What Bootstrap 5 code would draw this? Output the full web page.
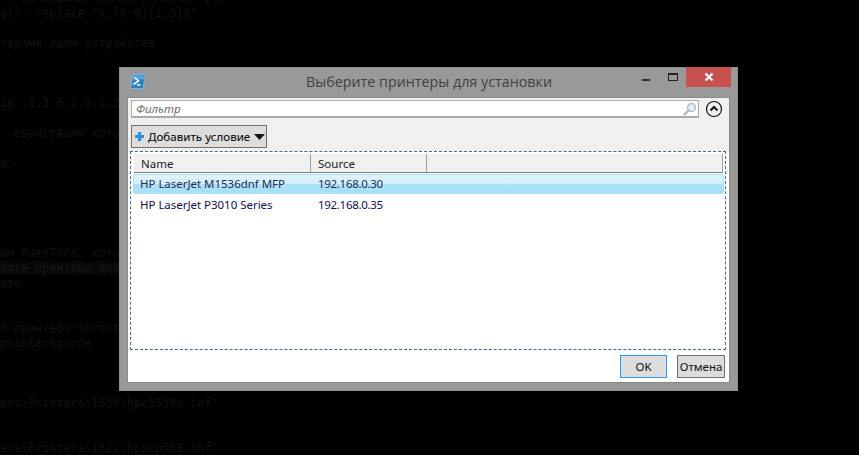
<!DOCTYPE html>
<html lang="ru">
<head>
<meta charset="utf-8">
<title>Выберите принтеры для установки</title>
<link rel="stylesheet" href="https://cdn.jsdelivr.net/npm/bootstrap@5.3.0/dist/css/bootstrap.min.css">
<style>
html,body{height:100%;background:#000;overflow:hidden}
body{position:relative;font-family:"Noto Sans","Open Sans",sans-serif;font-size:11.5px;color:#000}
.code-bg{margin:0;padding:0;color:#111;overflow:hidden;height:455px}
.code-ln{display:block;height:15px;font:normal 11.4px/15px "DejaVu Sans Mono",monospace;letter-spacing:.19px;white-space:pre}
.code-it{font-style:italic}
.code-num{color:#1a0f0b}
.code-hl{background:#070707;color:#171717}
.code-first{margin-top:-9px}
.win{position:absolute;left:119px;top:67px;width:619px;height:324px;background:#999;border:1px solid #8c8c8c;display:flex;flex-direction:column}
.win-head{height:29px;flex:none;position:relative}
.win-logo{position:absolute;left:10px;top:6px}
.win-title{font-family:"Open Sans","Noto Sans",sans-serif;font-size:14.3px;line-height:28px;color:#3f3f3f;text-align:center;padding-left:1px}
.win-ctrl{position:absolute;right:6px;top:-1px;height:20px;display:flex;align-items:flex-start}
.ctl-min{width:8px;height:2px;background:#2c2c2c;margin:12px 18px 0 0}
.ctl-max{width:10px;height:8px;border:1px solid #222;border-top-width:2px;margin:6px 8px 0 0}
.ctl-close{width:45px;height:20px;background:#c75050;display:flex;align-items:center;justify-content:center}
.win-body{flex:1;margin:0 7px 7px 7px;background:#fff;border:1px solid #8a8a8a;border-bottom-color:#888;display:flex;flex-direction:column;min-height:0}
.upper{background:#f0f0f0;height:54px;flex:none;padding:1px 0 0 3px}
.filter-row{display:flex;align-items:center;height:20px}
.filter-box{width:568px;height:18px;background:#fff;border:1px solid #ababab;border-bottom-width:2px;display:flex;align-items:center;justify-content:space-between;padding:0 1px 0 4px}
.filter-ph{font-style:italic;color:#6d6d6d;font-size:11.5px;line-height:15px}
.filter-up{margin-left:6px;flex:none}
.add-btn{width:136px;height:23px;margin-top:6px;padding:0 0 0 2px;background:#ddd;border:1px solid #707070;border-radius:0;display:flex;align-items:center;font-size:11.6px;color:#000;line-height:1}
.add-btn:hover{background:#ddd}
.add-btn svg{flex:none}
.add-lbl{margin:0 4px 0 3px;white-space:nowrap}
.grid-wrap{margin:-1px 3px 0 2px;height:199px;flex:none;border:1px dashed #3d6f8c;padding:2px 1px 0 2px;background:#fff}
.grid-head{display:flex;height:19px;margin:0 1px 0 1px;background:#f0f0f0;border-bottom:1px solid #808080;border-right:1px solid #a0a0a0;line-height:20px;color:#222}
.hcell{border-right:1px solid #a0a0a0;padding-left:7px;height:18px}
.hc1{width:177px}.hc2{width:116px}
.grid-row{display:flex;height:20px;color:#10104a;margin-top:1px}
.grid-row.sel{background:linear-gradient(#dff4fd 0,#d3effc 48%,#aee2fb 52%,#a5def9 100%);border:1px solid #a8e0fb;border-radius:2px;line-height:18px;color:#1e2a55}
.grid-row.plain{padding-left:1px;line-height:20px}
.rc1{width:184px;padding-left:6px;letter-spacing:-.03px}
.rc2{letter-spacing:-.3px}
.foot{flex:1;display:flex;justify-content:flex-end;gap:10px;padding:5px 4px 0 0}
.dlg-btn{height:23px;padding:0;border-radius:0;background:#ddd;font-size:11.5px;color:#111;line-height:20px}
.dlg-btn:hover{background:#ddd}
.ok-btn{width:47px;border:1px solid #2f9bef}
.no-btn{width:48px;border:1px solid #707070}
</style>
</head>
<body>
<div class="code-bg">
<span class="code-ln code-first">   командами, а мне и можно /24</span>
<span class="code-ln">g() -replace "\.[0-9]{1,3}$"</span>
<span class="code-ln"></span>
<span class="code-ln code-it">терами ищем устройства</span>
<span class="code-ln"></span>
<span class="code-ln"></span>
<span class="code-ln"></span>
<span class="code-ln">ip <span class="code-num">.1.3.6.1.2.1.25</span></span>
<span class="code-ln"></span>
<span class="code-ln code-it">  свойствами котор</span>
<span class="code-ln"></span>
<span class="code-ln">a;</span>
<span class="code-ln"></span>
<span class="code-ln"></span>
<span class="code-ln"></span>
<span class="code-ln"></span>
<span class="code-ln"></span>
<span class="code-ln code-it">ом PassThru, котор</span>
<span class="code-ln"><span class="code-hl">оите принтеры для</span></span>
<span class="code-ln">ame</span>
<span class="code-ln"></span>
<span class="code-ln"></span>
<span class="code-ln">P принтера $printe</span>
<span class="code-ln">printersource</span>
<span class="code-ln"></span>
<span class="code-ln"></span>
<span class="code-ln"></span>
<span class="code-ln">ers\Printers\1530\hpc1530c.inf'</span>
<span class="code-ln"></span>
<span class="code-ln"></span>
<span class="code-ln">ers\Printers\1522\hppcp608.inf'</span>
</div>

<div class="win">
  <div class="win-head">
    <svg class="win-logo" width="16" height="15" viewBox="0 0 16 15"><path d="M3 .5h12.500L13 14.500H.5z" fill="#2f7fc0" stroke="#7fb4dc"/><path d="M3 1.500h11.500l-.7 4H2.200z" fill="#5aa3d8"/><path d="M4.500 3.500l4 3.500-5 3.500" fill="none" stroke="#fff" stroke-width="1.600"/><path d="M7 11h3.500" stroke="#fff" stroke-width="1.400"/></svg>
    <div class="win-title">Выберите принтеры для установки</div>
    <div class="win-ctrl">
      <div class="ctl-min"></div>
      <div class="ctl-max"></div>
      <div class="ctl-close"><svg width="10" height="10" viewBox="0 0 10 10"><path d="M1.500 1.500l7 7M8.500 1.500l-7 7" stroke="#fff" stroke-width="2.200"/></svg></div>
    </div>
  </div>
  <div class="win-body">
    <div class="upper">
      <div class="filter-row">
        <div class="filter-box">
          <span class="filter-ph">Фильтр</span>
          <svg width="14" height="14" viewBox="0 0 14 14"><circle cx="8.500" cy="5.500" r="4" fill="#e3eff7" stroke="#a9bfcf" stroke-width="1.400"/><path d="M5.500 8.500L1.500 12.500" stroke="#b5b5b5" stroke-width="2.400" stroke-linecap="round"/></svg>
        </div>
        <svg class="filter-up" width="18" height="18" viewBox="0 0 18 18"><circle cx="9" cy="9" r="7.500" fill="none" stroke="#111" stroke-width="1.200"/><path d="M5.500 10.500L9 7l3.500 3.500" fill="none" stroke="#111" stroke-width="2"/></svg>
      </div>
      <button type="button" class="btn add-btn">
        <svg width="11" height="11" viewBox="0 0 11 11"><path d="M5.500 1v9M1 5.500h9" stroke="#2a8fdc" stroke-width="3.200"/></svg>
        <span class="add-lbl">Добавить условие</span>
        <svg width="11" height="6" viewBox="0 0 11 6"><path d="M0 0h11L5.500 6z" fill="#111"/></svg>
      </button>
    </div>
    <div class="grid-wrap">
      <div class="grid-head">
        <div class="hcell hc1">Name</div>
        <div class="hcell hc2">Source</div>
      </div>
      <div class="grid-row sel"><div class="rc1">HP LaserJet M1536dnf MFP</div><div class="rc2">192.168.0.30</div></div>
      <div class="grid-row plain"><div class="rc1">HP LaserJet P3010 Series</div><div class="rc2">192.168.0.35</div></div>
    </div>
    <div class="foot">
      <button type="button" class="btn dlg-btn ok-btn">OK</button>
      <button type="button" class="btn dlg-btn no-btn">Отмена</button>
    </div>
  </div>
</div>
<script src="https://cdn.jsdelivr.net/npm/bootstrap@5.3.0/dist/js/bootstrap.bundle.min.js"></script>
</body>
</html>
